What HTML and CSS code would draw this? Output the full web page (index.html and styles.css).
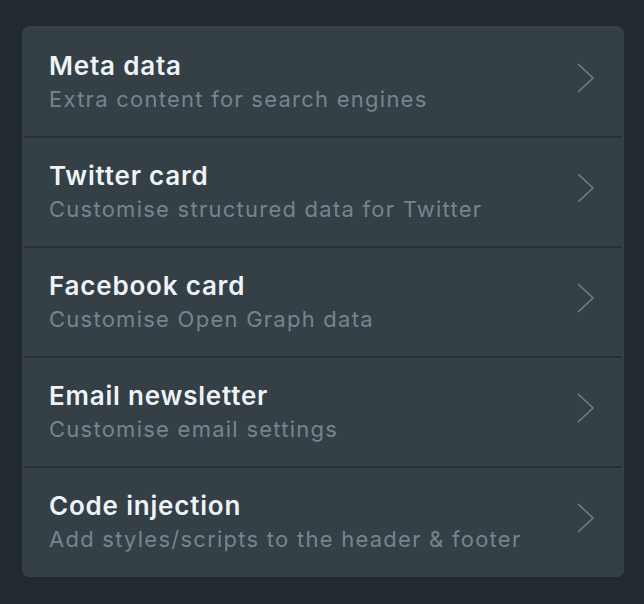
FILE: index.html
```html
<!DOCTYPE html>
<html>
<head>
<meta charset="utf-8">
<link rel="stylesheet" href="styles.css">
</head>
<body>
<div class="card">
  <div class="row">
    <div class="text">
      <div class="title">Meta data</div>
      <div class="sub">Extra content for search engines</div>
    </div>
    <svg class="chev" width="18" height="30" viewBox="0 0 18 30"><path d="M1 1 L16 15 L1 29" fill="none" stroke="#6d7e88" stroke-width="1.6"/></svg>
  </div>
  <div class="row">
    <div class="text">
      <div class="title">Twitter card</div>
      <div class="sub">Customise structured data for Twitter</div>
    </div>
    <svg class="chev" width="18" height="30" viewBox="0 0 18 30"><path d="M1 1 L16 15 L1 29" fill="none" stroke="#6d7e88" stroke-width="1.6"/></svg>
  </div>
  <div class="row">
    <div class="text">
      <div class="title">Facebook card</div>
      <div class="sub">Customise Open Graph data</div>
    </div>
    <svg class="chev" width="18" height="30" viewBox="0 0 18 30"><path d="M1 1 L16 15 L1 29" fill="none" stroke="#6d7e88" stroke-width="1.6"/></svg>
  </div>
  <div class="row">
    <div class="text">
      <div class="title">Email newsletter</div>
      <div class="sub">Customise email settings</div>
    </div>
    <svg class="chev" width="18" height="30" viewBox="0 0 18 30"><path d="M1 1 L16 15 L1 29" fill="none" stroke="#6d7e88" stroke-width="1.6"/></svg>
  </div>
  <div class="row">
    <div class="text">
      <div class="title">Code injection</div>
      <div class="sub">Add styles/scripts to the header &amp; footer</div>
    </div>
    <svg class="chev" width="18" height="30" viewBox="0 0 18 30"><path d="M1 1 L16 15 L1 29" fill="none" stroke="#6d7e88" stroke-width="1.6"/></svg>
  </div>
</div>
</body>
</html>
```

FILE: styles.css
```css
html, body {
  margin: 0;
  padding: 0;
  background: #222a31;
}
body {
  padding: 26px 20px 0 22px;
  font-family: Inter, "Noto Sans", sans-serif;
}
.card {
  background: #343f46;
  border-radius: 7px;
  padding: 2px 2px 1px 2px;
}
.row {
  height: 108px;
  box-sizing: border-box;
  display: flex;
  align-items: flex-start;
  justify-content: space-between;
  padding: 22px 27px 0 25px;
}
.row + .row {
  border-top: 2px solid #2a2f33;
  height: 110px;
}
.title {
  font-size: 26px;
  line-height: 32px;
  font-weight: 600;
  color: #edf3f7;
  letter-spacing: 0.8px;
}
.sub {
  margin-top: 3px;
  font-size: 22px;
  line-height: 28px;
  color: #74858f;
  letter-spacing: 1.25px;
}
.chev {
  margin-top: 13px;
}
```
